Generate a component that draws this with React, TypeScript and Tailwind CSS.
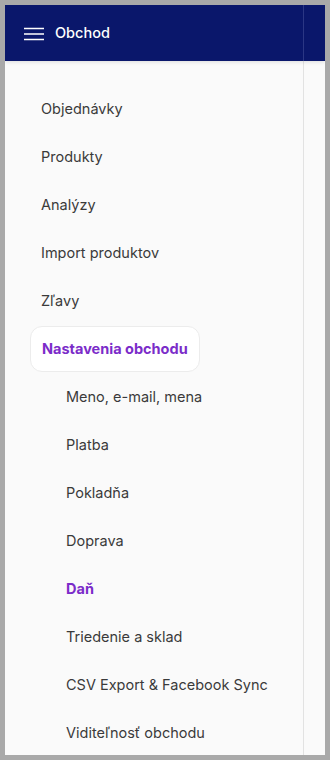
import React from 'react'

const main = ['Objednávky', 'Produkty', 'Analýzy', 'Import produktov', 'Zľavy']
const sub = [
  'Meno, e-mail, mena',
  'Platba',
  'Pokladňa',
  'Doprava',
  'Daň',
  'Triedenie a sklad',
  'CSV Export & Facebook Sync',
  'Viditeľnosť obchodu',
]

export default function App() {
  return (
    <div className="h-[760px] w-[330px] bg-[#a9a9a9] p-[5px] font-['Inter',sans-serif]">
      <div className="flex h-full flex-col overflow-hidden bg-[#fafafa]">
        <header className="relative z-10 flex h-[56px] shrink-0 bg-[#0a176b] shadow-[0_1px_4px_rgba(0,0,0,0.12)]">
          <div className="flex w-[299px] items-center gap-[11px] border-r border-[#2b3784] pl-[19px]">
            <svg width="20" height="14" viewBox="0 0 20 14" className="mt-px">
              <path d="M0 1.5h20M0 7h20M0 12.5h20" stroke="#fff" strokeWidth="1.4" />
            </svg>
            <span className="text-[14.5px] font-medium text-white">Obchod</span>
          </div>
        </header>
        <div className="flex flex-1">
          <nav className="w-[299px] border-r border-[#e2e2e2] pl-[25px] pt-[24px] text-[14.5px] text-[#3a3a3a]">
            {main.map(t => (
              <div key={t} className="flex h-[48px] items-center pl-[11px]">{t}</div>
            ))}
            <div className="flex h-[48px] items-center">
              <div className="flex h-[46px] items-center rounded-xl border border-[#ececec] bg-white px-[11px] font-bold text-[#7b2cc9]">
                Nastavenia obchodu
              </div>
            </div>
            {sub.map(t => (
              <div
                key={t}
                className={`flex h-[48px] items-center pl-[36px] ${t === 'Daň' ? 'font-bold text-[#7b2cc9]' : ''}`}
              >
                {t}
              </div>
            ))}
          </nav>
          <div className="flex-1 bg-[#fafafa]" />
        </div>
      </div>
    </div>
  )
}
